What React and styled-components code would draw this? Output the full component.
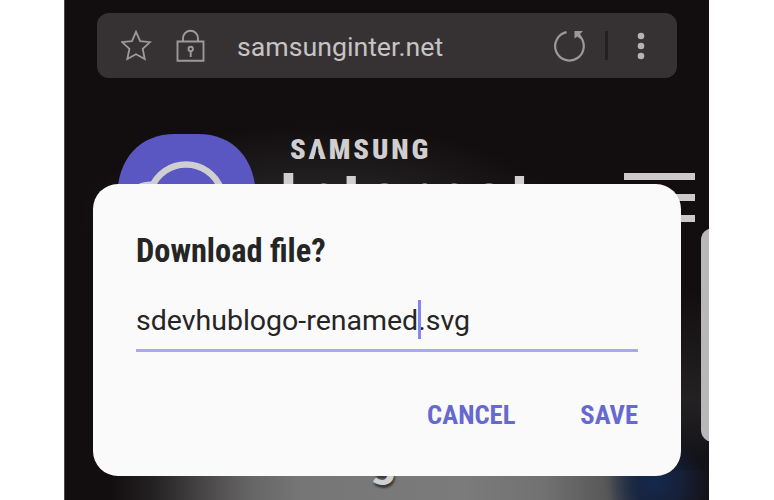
import React from "react";
import styled, { createGlobalStyle } from "styled-components";

const Global = createGlobalStyle`
  * { box-sizing: border-box; }
  body { margin: 0; background: #fff; font-family: Roboto, "Liberation Sans", sans-serif; }
`;

const Phone = styled.main`
  position: relative;
  width: 645px;
  height: 500px;
  margin-left: 64px;
  padding: 13px 32px 0 32px;
  overflow: hidden;
  border-left: 1px solid #4b494a;
  background:
    radial-gradient(ellipse 52px 44px at 590px 482px, #14284e, #14284e00),
    radial-gradient(ellipse 240px 90px at 255px 215px, #2c2a2b, #2c2a2b00),
    linear-gradient(90deg, #120e0f 45px, #252223 90px, #484546 137px, #666566 185px, #777677 235px, #7b7b7b 400px, #717171 480px, #565656 545px, #1c2030 575px, #14131a 640px) 0 470px / 100% 30px no-repeat,
    linear-gradient(#120e0f 290px, #242122 400px, #121218 460px) 100% 0 / 60px 100% no-repeat,
    #120e0f;
`;

const AddressBar = styled.header`
  display: flex;
  align-items: center;
  width: 580px;
  height: 65px;
  padding: 0 32px 0 24px;
  border-radius: 12px;
  background: #363233;
  color: #9b9999;
`;

const Icon = styled.svg`
  display: block;
  flex: none;
  width: ${p => p.$w}px;
  height: ${p => p.$h}px;
  margin-left: ${p => p.$left || 0}px;
  fill: none;
  stroke: currentColor;
`;

const Url = styled.span`
  flex: 1;
  margin-left: 31px;
  color: #c5c3c4;
  font-size: 26.7px;
  line-height: 32px;
  padding-top: 3px;
`;

const Separator = styled.i`
  width: 3px;
  height: 29px;
  margin-left: 19px;
  background: #242021;
`;

const SiteHeader = styled.section`
  display: flex;
  align-items: flex-start;
  width: 600px;
  margin-top: 56px;
  padding-left: 19.5px;
`;

const Brand = styled.div`
  flex: 1;
  padding-left: 34.5px;
  color: #d0cece;
`;

const Samsung = styled.div`
  font: 900 28.5px/31px "Roboto Condensed", Roboto, sans-serif;
  letter-spacing: 2.9px;
`;

const OpenA = styled.span`
  position: relative;
  &::after {
    content: "";
    position: absolute;
    left: 5.2px;
    bottom: 6px;
    width: 6.4px;
    height: 14px;
    background: #191617;
    clip-path: polygon(50% 0, 100% 100%, 0 100%);
  }
`;

const Internet = styled.div`
  margin: -4px 0 0 -10px;
  font-size: 56px;
  line-height: 66px;
  font-weight: 900;
  letter-spacing: 7px;
`;

const Menu = styled.div`
  display: grid;
  flex: none;
  gap: 14px;
  width: 71px;
  margin: 39px 2px 0 0;
`;

const MenuLine = styled.i`
  height: 7px;
  background: #cbc9c9;
`;

const Dialog = styled.form`
  position: absolute;
  left: 28px;
  top: 184px;
  width: 587.5px;
  height: 292.4px;
  padding: 47px 42.5px 0 43px;
  border-radius: 25px;
  background: #fafafa;
  color: #252525;
`;

const Title = styled.h1`
  margin: 0;
  font: 700 32.4px/40px "Roboto Condensed", Roboto, sans-serif;
`;

const Field = styled.div`
  display: flex;
  align-items: center;
  height: 64px;
  margin-top: 17px;
  padding-top: 4px;
  border-bottom: 3px solid #a9a9ef;
  font-size: 28.5px;
  white-space: nowrap;
`;

const FileName = styled.span`
  position: relative;
`;

const Caret = styled.i`
  position: absolute;
  left: 282px;
  top: -4px;
  width: 3px;
  height: 39px;
  background: #8585ee;
`;

const Actions = styled.div`
  display: flex;
  justify-content: flex-end;
  gap: 65px;
  margin-top: 47px;
`;

const Action = styled.button`
  padding: 0;
  border: 0;
  background: none;
  color: #6669cf;
  font: 700 26.6px/32px "Roboto Condensed", Roboto, sans-serif;
`;

const ScrollPanel = styled.aside`
  position: absolute;
  left: 636px;
  top: 228px;
  width: 30px;
  height: 214px;
  border-radius: 12px;
  background: #b9b8b8;
`;

const Heading = styled.div`
  position: absolute;
  left: 305px;
  top: 434px;
  color: #d0d0d0;
  font-size: 46px;
  line-height: 52px;
  font-weight: 700;
  text-shadow: 1px 3px 2px #3b3939;
`;

export default function App() {
  return (
    <>
      <Global />
      <Phone>
        <AddressBar>
          <Icon $w={31} $h={32} viewBox="0 0 32 32" strokeWidth="1.9">
            <path d="M15.5 1.4 19.8 11l10.2 1-7.6 7 2.1 10.4-9-4.9-9 4.9L8.7 19 1.2 12l10.1-1z" />
          </Icon>
          <Icon $w={30} $h={34} $left={24} viewBox="0 0 30 34" strokeWidth="1.9">
            <path d="M1.5 12.5h26v19.3h-26zM7 12.5V9.3a7.5 7.5 0 0 1 15 0v3.2" />
            <circle cx="14.7" cy="20" r="2.2" />
            <path d="M14.7 22v6" />
          </Icon>
          <Url>samsunginter.net</Url>
          <Icon $w={32} $h={32} viewBox="0 0 32 32" strokeWidth="2.2">
            <path d="M12.6 2.2A14.3 14.3 0 1 0 25.5 6" />
            <path d="M20.5 1h8.5l-3 3 2 3-2.500 1.500-2-2-3 2z" fill="currentColor" stroke="none" />
          </Icon>
          <Separator />
          <Icon $w={8} $h={32} $left={29} viewBox="0 0 8 32">
            <g fill="#b5b3b4" stroke="none">
              <circle cx="4" cy="6" r="3.3" />
              <circle cx="4" cy="16" r="3.3" />
              <circle cx="4" cy="26" r="3.3" />
            </g>
          </Icon>
        </AddressBar>
        <SiteHeader>
          <Icon $w={139} $h={100} viewBox="0 0 139 100">
            <path d="M0 65C0 24 23 0 58 0h23c35 0 58 24 58 65v35H0z" fill="#5a56c2" stroke="none" />
            <path d="M18 56C24 51 30 50 37 51M33.5 56C46 22 92 22 104.5 56" stroke="#cfcfd1" strokeWidth="6.5" />
          </Icon>
          <Brand>
            <Samsung>S<OpenA>A</OpenA>MSUNG</Samsung>
            <Internet>Internet</Internet>
          </Brand>
          <Menu><MenuLine /><MenuLine /><MenuLine /></Menu>
        </SiteHeader>
        <Heading>g</Heading>
        <ScrollPanel />
        <Dialog>
          <Title>Download file?</Title>
          <Field><FileName>sdevhublogo-renamed.svg<Caret /></FileName></Field>
          <Actions>
            <Action type="button">CANCEL</Action>
            <Action type="button">SAVE</Action>
          </Actions>
        </Dialog>
      </Phone>
    </>
  );
}
